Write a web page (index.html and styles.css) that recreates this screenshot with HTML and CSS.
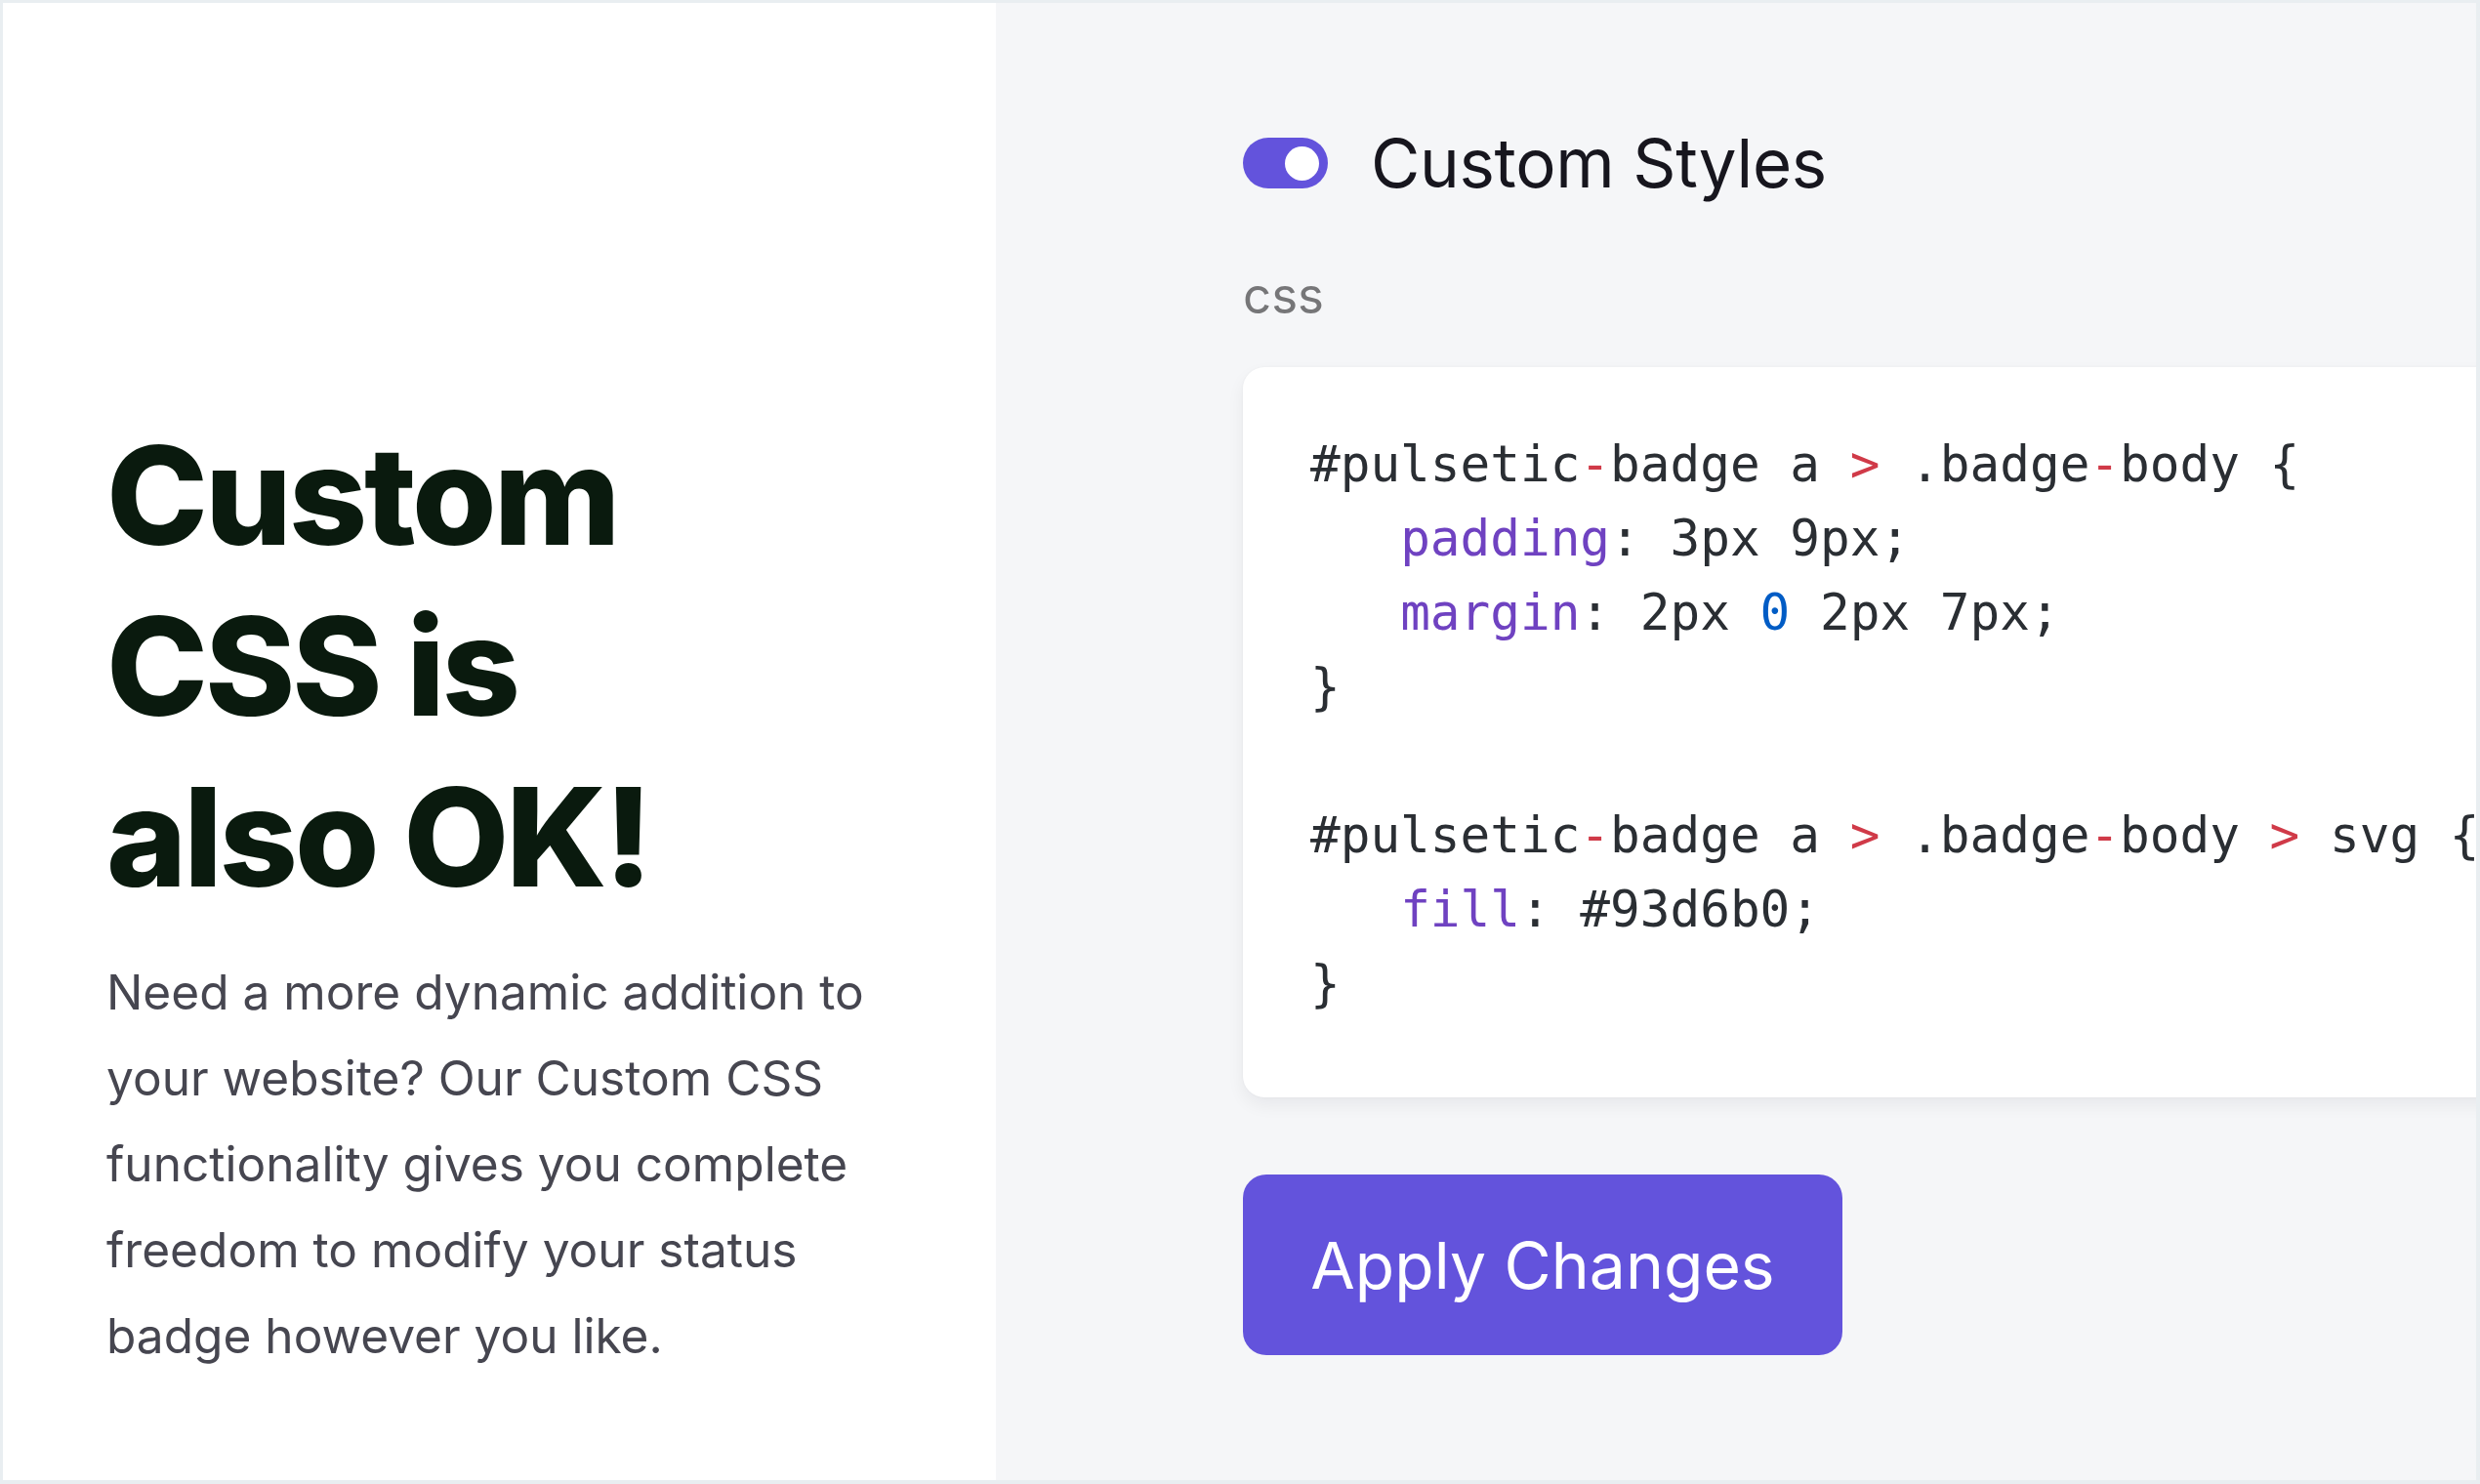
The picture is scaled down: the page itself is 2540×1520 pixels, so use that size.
FILE: index.html
```html
<!DOCTYPE html>
<html lang="en">
<head>
<meta charset="utf-8">
<title>Custom CSS</title>
<link rel="stylesheet" href="styles.css">
</head>
<body>
<div class="page">
  <section class="intro">
    <h1 class="headline">Custom CSS is also OK!</h1>
    <p class="lead">Need a more dynamic addition to your website? Our Custom CSS functionality gives you complete freedom to modify your status badge however you like.</p>
  </section>
  <section class="editor">
    <div class="toggle-row">
      <span class="toggle"><span class="knob"></span></span>
      <span class="toggle-label">Custom Styles</span>
    </div>
    <div class="field-label">css</div>
    <div class="code-card"><pre class="code">#pulsetic<span class="op">-</span>badge a <span class="op">&gt;</span> .badge<span class="op">-</span>body {
   <span class="prop">padding</span>: 3px 9px;
   <span class="prop">margin</span>: 2px <span class="num">0</span> 2px 7px;
}

#pulsetic<span class="op">-</span>badge a <span class="op">&gt;</span> .badge<span class="op">-</span>body <span class="op">&gt;</span> svg {
   <span class="prop">fill</span>: #93d6b0;
}</pre></div>
    <button class="apply" type="button">Apply Changes</button>
  </section>
</div>
</body>
</html>
```

FILE: styles.css
```css
* { box-sizing: border-box; }

html, body {
  margin: 0;
  padding: 0;
}

body {
  font-family: Inter, "Noto Sans", "Liberation Sans", sans-serif;
  background: #e9eef1;
}

.page {
  width: 2540px;
  height: 1520px;
  border-style: solid;
  border-color: #e9eef1;
  border-width: 3px 4px 4px 3px;
  display: grid;
  grid-template-columns: 1017px 1fr;
  overflow: hidden;
}

.intro {
  background: #ffffff;
  padding: 417px 80px 0 106px;
}

.headline {
  margin: 0;
  max-width: 640px;
  font-size: 140px;
  line-height: 175px;
  font-weight: 800;
  letter-spacing: -0.022em;
  color: #0a1a0e;
}

.lead {
  margin: 27px 0 0 0;
  max-width: 820px;
  font-size: 49.6px;
  line-height: 88px;
  font-weight: 400;
  color: #464650;
}

.editor {
  background: #f5f6f8;
  padding: 138px 0 0 253px;
  overflow: hidden;
  min-width: 0;
}

.toggle-row {
  display: flex;
  align-items: center;
  height: 52px;
  gap: 44px;
}

.toggle {
  width: 87px;
  height: 52px;
  border-radius: 26px;
  background: #6353dc;
  display: flex;
  align-items: center;
  justify-content: flex-end;
  padding: 0 9px;
  flex: none;
}

.knob {
  width: 35px;
  height: 35px;
  border-radius: 50%;
  background: #ffffff;
}

.toggle-label {
  font-size: 69px;
  line-height: 1;
  font-weight: 400;
  color: #17161e;
  letter-spacing: -0.005em;
}

.field-label {
  margin-top: 84px;
  font-size: 51px;
  line-height: 51px;
  color: #767678;
}

.code-card {
  margin-top: 48px;
  margin-right: -40px;
  height: 748px;
  background: #ffffff;
  border-radius: 22px;
  box-shadow: 0 8px 18px rgba(20, 24, 40, 0.06), 0 0 3px rgba(20, 24, 40, 0.04);
  padding: 62px 0 0 69px;
  overflow: hidden;
}

.code {
  margin: 0;
  font-family: "DejaVu Sans Mono", "Liberation Mono", monospace;
  font-size: 51px;
  line-height: 76px;
  color: #2a2e33;
  white-space: pre;
}

.op { color: #d03a48; }
.prop { color: #6f42c1; }
.num { color: #005cc5; }

.apply {
  margin-top: 79px;
  width: 614px;
  height: 185px;
  border: none;
  border-radius: 24px;
  background: #6353dc;
  color: #ffffff;
  font-family: Inter, "Noto Sans", "Liberation Sans", sans-serif;
  font-size: 66px;
  font-weight: 400;
  cursor: pointer;
  padding: 0;
}
```
